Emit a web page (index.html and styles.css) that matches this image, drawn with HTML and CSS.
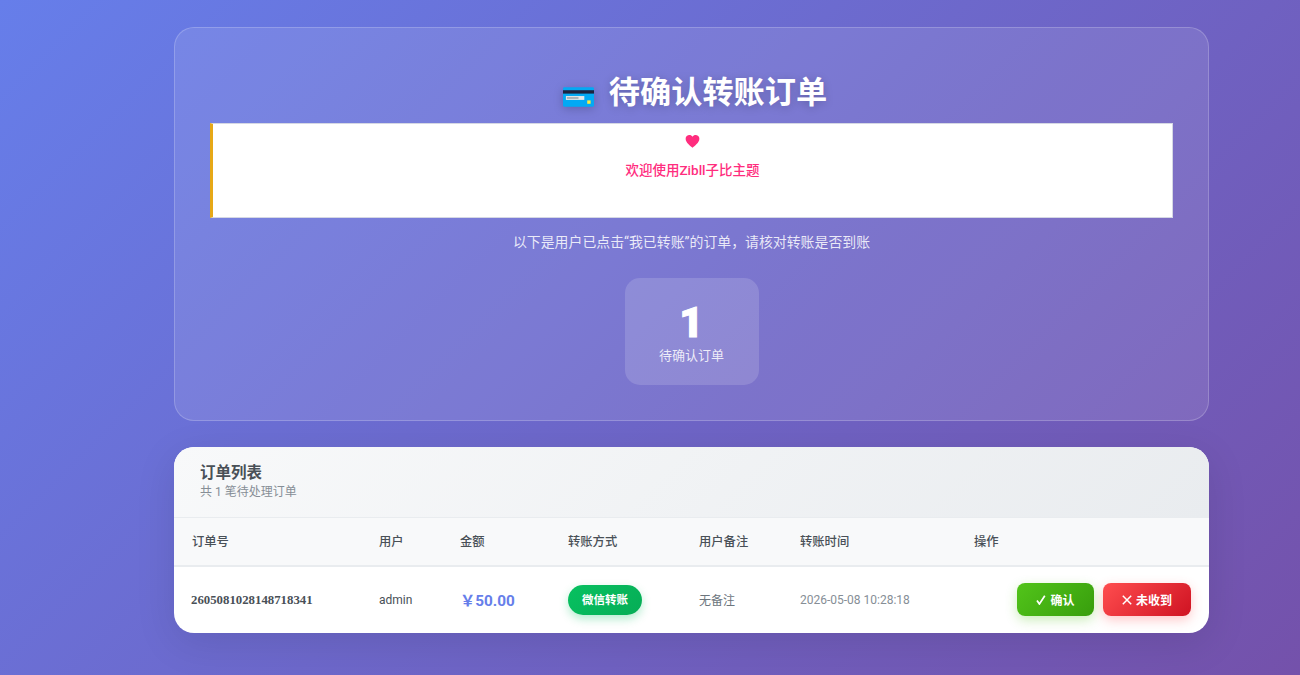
FILE: index.html
```html
<!DOCTYPE html>
<html lang="zh-CN">
<head>
<meta charset="utf-8">
<title>待确认转账订单</title>
<link rel="stylesheet" href="styles.css">
</head>
<body>
<main class="page">
  <section class="hero">
    <h1 class="hero-title">
      <svg class="card-icon" viewBox="0 0 32 20" aria-hidden="true">
        <rect x="0" y="0" width="32" height="20" rx="1.5" fill="#03a9f4"/>
        <rect x="0" y="3" width="32" height="3.5" fill="#1c2340"/>
        <rect x="3" y="9" width="19" height="4" fill="#e3e7ea"/>
        <rect x="4" y="10" width="12" height="2" fill="#a9b2b8"/>
        <rect x="25" y="13.500" width="3.500" height="3.500" fill="#ffeb3b"/>
      </svg>
      <span>待确认转账订单</span>
    </h1>
    <div class="notice">
      <svg class="heart" viewBox="0 0 24 24" aria-hidden="true">
        <path d="M12 22 C9 19 1 14 1 7.500 C1 3.500 4 1.500 7 1.500 C9 1.500 11 2.500 12 4.500 C13 2.500 15 1.500 17 1.500 C20 1.500 23 3.500 23 7.500 C23 14 15 19 12 22 Z" fill="#ff2d7e"/>
      </svg>
      <p class="notice-text">欢迎使用Zibll子比主题</p>
    </div>
    <p class="hero-sub">以下是用户已点击“我已转账”的订单，请核对转账是否到账</p>
    <div class="stat">
      <div class="stat-num">1</div>
      <div class="stat-label">待确认订单</div>
    </div>
  </section>

  <section class="panel">
    <header class="panel-head">
      <h2 class="panel-title">订单列表</h2>
      <p class="panel-sub">共 1 笔待处理订单</p>
    </header>
    <table class="orders">
      <colgroup>
        <col class="c1"><col class="c2"><col class="c3"><col class="c4"><col class="c5"><col class="c6"><col class="c7">
      </colgroup>
      <thead>
        <tr>
          <th>订单号</th><th>用户</th><th>金额</th><th>转账方式</th><th>用户备注</th><th>转账时间</th><th>操作</th>
        </tr>
      </thead>
      <tbody>
        <tr>
          <td class="order-no">2605081028148718341</td>
          <td class="user">admin</td>
          <td class="amount">￥50.00</td>
          <td><span class="pay-tag">微信转账</span></td>
          <td class="note">无备注</td>
          <td class="time">2026-05-08 10:28:18</td>
          <td class="action-cell">
            <div class="actions">
              <button class="btn btn-ok" type="button">
                <svg class="btn-icon" viewBox="0 0 10 10" aria-hidden="true"><path d="M1 5.500 L3.400 9 L8.800 0.800" fill="none" stroke="#fff" stroke-width="1.700"/></svg>
                <span>确认</span>
              </button>
              <button class="btn btn-no" type="button">
                <svg class="btn-icon" viewBox="0 0 10 10" aria-hidden="true"><path d="M0.800 0.800 L9.200 9.200 M9.200 0.800 L0.800 9.200" fill="none" stroke="#fff" stroke-width="1.500"/></svg>
                <span>未收到</span>
              </button>
            </div>
          </td>
        </tr>
      </tbody>
    </table>
  </section>
</main>
</body>
</html>
```
FILE: styles.css
```css
* { box-sizing: border-box; }
html, body { margin: 0; height: 100%; }
body {
  min-height: 675px;
  overflow: hidden;
  background: linear-gradient(135deg, #667eea 0%, #764ba2 100%) no-repeat;
  background-size: 100% 945px;
  background-color: #764ba2;
  font-family: Roboto, "Noto Sans CJK SC", sans-serif;
  color: #495057;
}
.page {
  width: 1035px;
  margin-left: 174px;
  padding-top: 27px;
  display: flex;
  flex-direction: column;
  gap: 26px;
}
.hero {
  height: 394px;
  padding: 39px 35px 0;
  border: 1px solid rgba(255, 255, 255, 0.2);
  border-radius: 20px;
  background: rgba(255, 255, 255, 0.1);
  text-align: center;
  display: flex;
  flex-direction: column;
  align-items: center;
}
.hero-title {
  margin: 0 0 0 7px;
  height: 56px;
  padding-bottom: 5px;
  font-size: 31.2px;
  line-height: 48px;
  font-weight: 700;
  color: #fff;
  text-shadow: 0 2px 10px rgba(0, 0, 0, 0.2);
  display: flex;
  align-items: center;
  gap: 15px;
}
.card-icon {
  width: 31px;
  height: 20px;
  margin-top: 8px;
  filter: drop-shadow(0 2px 5px rgba(0, 0, 0, 0.2));
}
.notice {
  width: 100%;
  height: 95px;
  background: #fff;
  border: 1px solid #d5d8e4;
  border-left: 3px solid #e6a817;
  padding-top: 10px;
  flex: none;
}
.heart { display: block; width: 15px; height: 15px; margin: 0 auto; }
.notice-text {
  margin: 11px 0 0;
  font-size: 13.5px;
  line-height: 20px;
  font-weight: 500;
  color: #ff2d7e;
}
.hero-sub {
  margin: 14px 0 0;
  font-size: 13.9px;
  line-height: 21px;
  color: rgba(255, 255, 255, 0.85);
}
.stat {
  width: 134px;
  height: 107px;
  margin-top: 25px;
  border-radius: 15px;
  background: rgba(255, 255, 255, 0.15);
  padding-top: 20px;
}
.stat-num {
  font-family: Roboto, sans-serif;
  font-size: 42px;
  line-height: 50px;
  font-weight: 900;
  color: #fff;
  -webkit-text-stroke: 1px #fff;
}
.stat-label {
  margin-top: -1px;
  font-size: 13px;
  line-height: 18px;
  color: rgba(255, 255, 255, 0.85);
}
.panel {
  height: 186px;
  border-radius: 20px;
  background: #fff;
  overflow: hidden;
  box-shadow: 0 10px 40px rgba(0, 0, 0, 0.1);
}
.panel-head {
  height: 71px;
  padding: 15px 26px 0;
  background: linear-gradient(135deg, #f8f9fa 0%, #e9ecef 100%);
  border-bottom: 1px solid #e9ecef;
}
.panel-title {
  margin: 0;
  font-size: 15.5px;
  line-height: 22px;
  font-weight: 700;
  color: #495057;
}
.panel-sub {
  margin: 0;
  font-size: 12px;
  line-height: 16px;
  color: #868e96;
}
.orders {
  width: 100%;
  border-collapse: collapse;
  table-layout: fixed;
}
.c1 { width: 187px; }
.c2 { width: 81px; }
.c3 { width: 108px; }
.c4 { width: 131px; }
.c5 { width: 101px; }
.c6 { width: 174px; }
.orders th {
  height: 48px;
  padding: 0 18px 2px;
  background: #f8f9fa;
  border-bottom: 2px solid #e9ecef;
  text-align: left;
  font-size: 12.3px;
  font-weight: 500;
  color: #495057;
}
.orders td {
  height: 67px;
  padding: 0 18px;
  font-size: 12px;
  color: #495057;
}
.orders .order-no {
  padding-left: 17px;
  font-family: "Liberation Serif", "Noto Sans CJK SC", serif;
  font-size: 12.8px;
  font-weight: 700;
  color: #495057;
}
.orders .amount {
  padding-bottom: 2px;
  font-size: 15.3px;
  font-weight: 700;
  color: #667eea;
}
.orders .note {
  padding-bottom: 2px;
  color: #6c757d;
}
.pay-tag {
  display: inline-block;
  height: 30px;
  padding: 0 14px;
  border-radius: 15px;
  background: linear-gradient(135deg, #07c160 0%, #06ad56 100%);
  box-shadow: 0 4px 10px rgba(7, 193, 96, 0.3);
  font-size: 11.5px;
  line-height: 30px;
  font-weight: 700;
  color: #fff;
}
.orders .time { color: #868e96; }
.orders .action-cell { padding-bottom: 1px; }
.actions {
  display: flex;
  justify-content: flex-end;
  gap: 9px;
}
.btn {
  height: 33px;
  padding: 0;
  border: 0;
  border-radius: 8px;
  font-family: inherit;
  font-size: 12px;
  font-weight: 700;
  color: #fff;
  cursor: pointer;
  display: flex;
  align-items: center;
  justify-content: center;
  gap: 4px;
}
.btn-icon { width: 10px; height: 10px; }
.btn-ok {
  width: 77px;
  background: linear-gradient(135deg, #52c41a 0%, #389e0d 100%);
  box-shadow: 0 4px 12px rgba(82, 196, 26, 0.3);
}
.btn-no {
  width: 88px;
  background: linear-gradient(135deg, #ff4d4f 0%, #cf1322 100%);
  box-shadow: 0 4px 12px rgba(255, 77, 79, 0.3);
}
```
